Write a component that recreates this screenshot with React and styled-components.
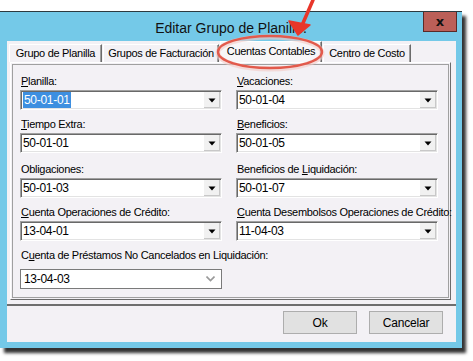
import React from "react"
import styled, { createGlobalStyle } from "styled-components"

const GlobalStyle = createGlobalStyle`
  html, body {
    margin: 0;
    padding: 0;
    background: #ffffff;
  }
  body {
    font-family: "Liberation Sans", Arial, sans-serif;
    font-size: 11px;
    color: #000;
  }
`

const Page = styled.div`
  position: relative;
  width: 473px;
  height: 361px;
  overflow: hidden;
  padding-top: 11px;
  box-sizing: border-box;
`

const Window = styled.div`
  width: 462px;
  height: 337px;
  box-sizing: border-box;
  background: #74c9e8;
  border-top: 1px solid #2d3a40;
  box-shadow: 4px 5px 3px rgba(0, 0, 0, 0.8);
  display: flex;
  flex-direction: column;
`

const TitleBar = styled.div`
  height: 29px;
  display: grid;
  grid-template-columns: 1fr auto 1fr;
  align-items: start;
`

const Title = styled.div`
  grid-column: 2;
  font-size: 14px;
  line-height: 16px;
  margin-top: 8px;
  color: #111;
`

const CloseButton = styled.div`
  grid-column: 3;
  justify-self: end;
  margin-right: 5px;
  width: 34px;
  height: 20px;
  box-sizing: border-box;
  background: #bb5f58;
  border: 1px solid #5a2a27;
  border-top: none;
  display: flex;
  align-items: center;
  justify-content: center;
  font-family: "DejaVu Sans", sans-serif;
  font-weight: bold;
  font-size: 13px;
  color: #111;
`

const Client = styled.div`
  flex: 1;
  margin: 0 6px 6px 7px;
  background: #f3f1f5;
  display: flex;
  flex-direction: column;
`

const TabStrip = styled.div`
  display: flex;
  align-items: flex-end;
  height: 21px;
  padding-left: 1px;
`

const Tab = styled.div`
  width: ${p => p.$width}px;
  height: ${p => (p.$active ? "21px" : "18px")};
  box-sizing: border-box;
  padding-top: ${p => (p.$active ? "3px" : "2px")};
  margin-left: 1px;
  border: 1px solid #fff;
  border-right: 1px solid #6b6b6b;
  border-bottom: none;
  box-shadow: inset -1px 0 0 #a0a0a0;
  background: ${p => (p.$active ? "#f7f6f8" : "#f3f1f5")};
  white-space: nowrap;
  text-align: center;
  line-height: 13px;
  letter-spacing: -0.3px;
`

const Panel = styled.div`
  height: 238px;
  margin: 0 5px 0 3px;
  box-sizing: border-box;
  border: 1px solid #fff;
  border-right-color: #6b6b6b;
  border-bottom-color: #6b6b6b;
  padding: 1px;
`

const PanelInner = styled.div`
  height: 100%;
  box-sizing: border-box;
  border: 1px solid #a0a0a0;
  padding: 10px 10px 0 7px;
  display: grid;
  grid-template-columns: 202px 202px;
  column-gap: 14px;
  row-gap: 8px;
  align-content: start;
`

const Field = styled.div`
  display: flex;
  flex-direction: column;
  gap: ${p => (p.$loose ? "7px" : "2px")};
  grid-column: ${p => (p.$wide ? "1 / 2" : "auto")};
  margin-top: ${p => (p.$shift ? "2px" : "0")};
`

const Label = styled.div`
  line-height: 13px;
  padding-left: 1px;
  white-space: nowrap;
  letter-spacing: -0.3px;
  u {
    text-decoration: underline;
    text-underline-offset: 1px;
  }
`

const Combo = styled.div`
  height: 20px;
  box-sizing: border-box;
  background: #fff;
  border: 1px solid;
  border-color: #a0a0a0 #fff #fff #a0a0a0;
  box-shadow: inset 1px 1px 0 #696969, inset -1px -1px 0 #e3e3e3;
  display: flex;
  align-items: stretch;
`

const FlatCombo = styled.div`
  height: 20px;
  box-sizing: border-box;
  background: #fff;
  border: 1px solid #7a7a7a;
  display: flex;
  align-items: center;
  justify-content: space-between;
  padding: 0 6px 0 3px;
  font-size: 12px;
  letter-spacing: -0.3px;
`

const ComboText = styled.div`
  flex: 1;
  display: flex;
  align-items: center;
  padding-left: 2px;
  font-size: 12px;
  letter-spacing: -0.3px;
`

const Selected = styled.span`
  background: #3d8fe0;
  color: #fff;
  padding: 1px 1px;
`

const DropButton = styled.div`
  width: 16px;
  margin: 1px;
  background: #f1f1f1;
  border-left: 1px solid #fff;
  box-shadow: inset -1px -1px 0 #c8c8c8;
  display: flex;
  align-items: center;
  justify-content: center;
`

const Footer = styled.div`
  flex: 1;
  margin-top: 4px;
  border-top: 2px solid #6e6e6e;
  display: flex;
  justify-content: flex-end;
  align-items: flex-start;
  gap: 12px;
  padding: 5px 13px 0 0;
`

const Button = styled.div`
  width: 74px;
  height: 23px;
  box-sizing: border-box;
  background: #e1e1e1;
  border: 1px solid #adadad;
  display: flex;
  align-items: center;
  justify-content: center;
  font-size: 12px;
  letter-spacing: -0.2px;
`

const Annotation = styled.svg`
  position: absolute;
  left: 0;
  top: 0;
  pointer-events: none;
`

const Arrow = () => (
  <svg width="8" height="5" viewBox="0 0 8 5">
    <path d="M0.5 0.5 L7.5 0.5 L4 4.5 Z" fill="#000" />
  </svg>
)

const Chevron = () => (
  <svg width="9" height="6" viewBox="0 0 9 6">
    <path d="M0.5 0.5 L4.5 4.5 L8.5 0.5" fill="none" stroke="#9a9a9a" strokeWidth="1.6" />
  </svg>
)

const ComboBox = ({ value, selected }) => (
  <Combo>
    <ComboText>{selected ? <Selected>{value}</Selected> : value}</ComboText>
    <DropButton><Arrow /></DropButton>
  </Combo>
)

const tabs = [
  { label: "Grupo de Planilla", width: 93 },
  { label: "Grupos de Facturación", width: 116 },
  { label: "Cuentas Contables", width: 102, active: true },
  { label: "Centro de Costo", width: 88 },
]

export default function App() {
  return (
    <Page>
      <GlobalStyle />
      <Window>
        <TitleBar>
          <Title>Editar Grupo de Planill...</Title>
          <CloseButton>x</CloseButton>
        </TitleBar>
        <Client>
          <TabStrip>
            {tabs.map(t => (
              <Tab key={t.label} $width={t.width} $active={t.active}>{t.label}</Tab>
            ))}
          </TabStrip>
          <Panel>
            <PanelInner>
              <Field>
                <Label><u>P</u>lanilla:</Label>
                <ComboBox value="50-01-01" selected />
              </Field>
              <Field>
                <Label><u>V</u>acaciones:</Label>
                <ComboBox value="50-01-04" />
              </Field>
              <Field>
                <Label><u>T</u>iempo Extra:</Label>
                <ComboBox value="50-01-01" />
              </Field>
              <Field>
                <Label><u>B</u>eneficios:</Label>
                <ComboBox value="50-01-05" />
              </Field>
              <Field $shift>
                <Label>Obligaciones:</Label>
                <ComboBox value="50-01-03" />
              </Field>
              <Field $shift>
                <Label>Beneficios de <u>L</u>iquidación:</Label>
                <ComboBox value="50-01-07" />
              </Field>
              <Field>
                <Label><u>C</u>uenta Operaciones de Crédito:</Label>
                <ComboBox value="13-04-01" />
              </Field>
              <Field>
                <Label><u>C</u>uenta Desembolsos Operaciones de Crédito:</Label>
                <ComboBox value="11-04-03" />
              </Field>
              <Field $loose $wide>
                <Label>C<u>u</u>enta de Préstamos No Cancelados en Liquidación:</Label>
                <FlatCombo>13-04-03<Chevron /></FlatCombo>
              </Field>
            </PanelInner>
          </Panel>
          <Footer>
            <Button>Ok</Button>
            <Button>Cancelar</Button>
          </Footer>
        </Client>
      </Window>
      <Annotation width="473" height="361" viewBox="0 0 473 361">
        <ellipse cx="270" cy="53" rx="52" ry="16" fill="none" stroke="#f4c9c4" strokeWidth="5" opacity="0.6" />
        <ellipse cx="270" cy="52" rx="52" ry="16" fill="none" stroke="#e25a4c" strokeWidth="2.4" />
        <path d="M313 0 L300 30" stroke="#e8362a" strokeWidth="3.5" strokeLinecap="round" />
        <path d="M289 21 L298 35 L310 25 Z" fill="#e8362a" stroke="#e8362a" strokeWidth="1.5" strokeLinejoin="round" />
      </Annotation>
    </Page>
  )
}
